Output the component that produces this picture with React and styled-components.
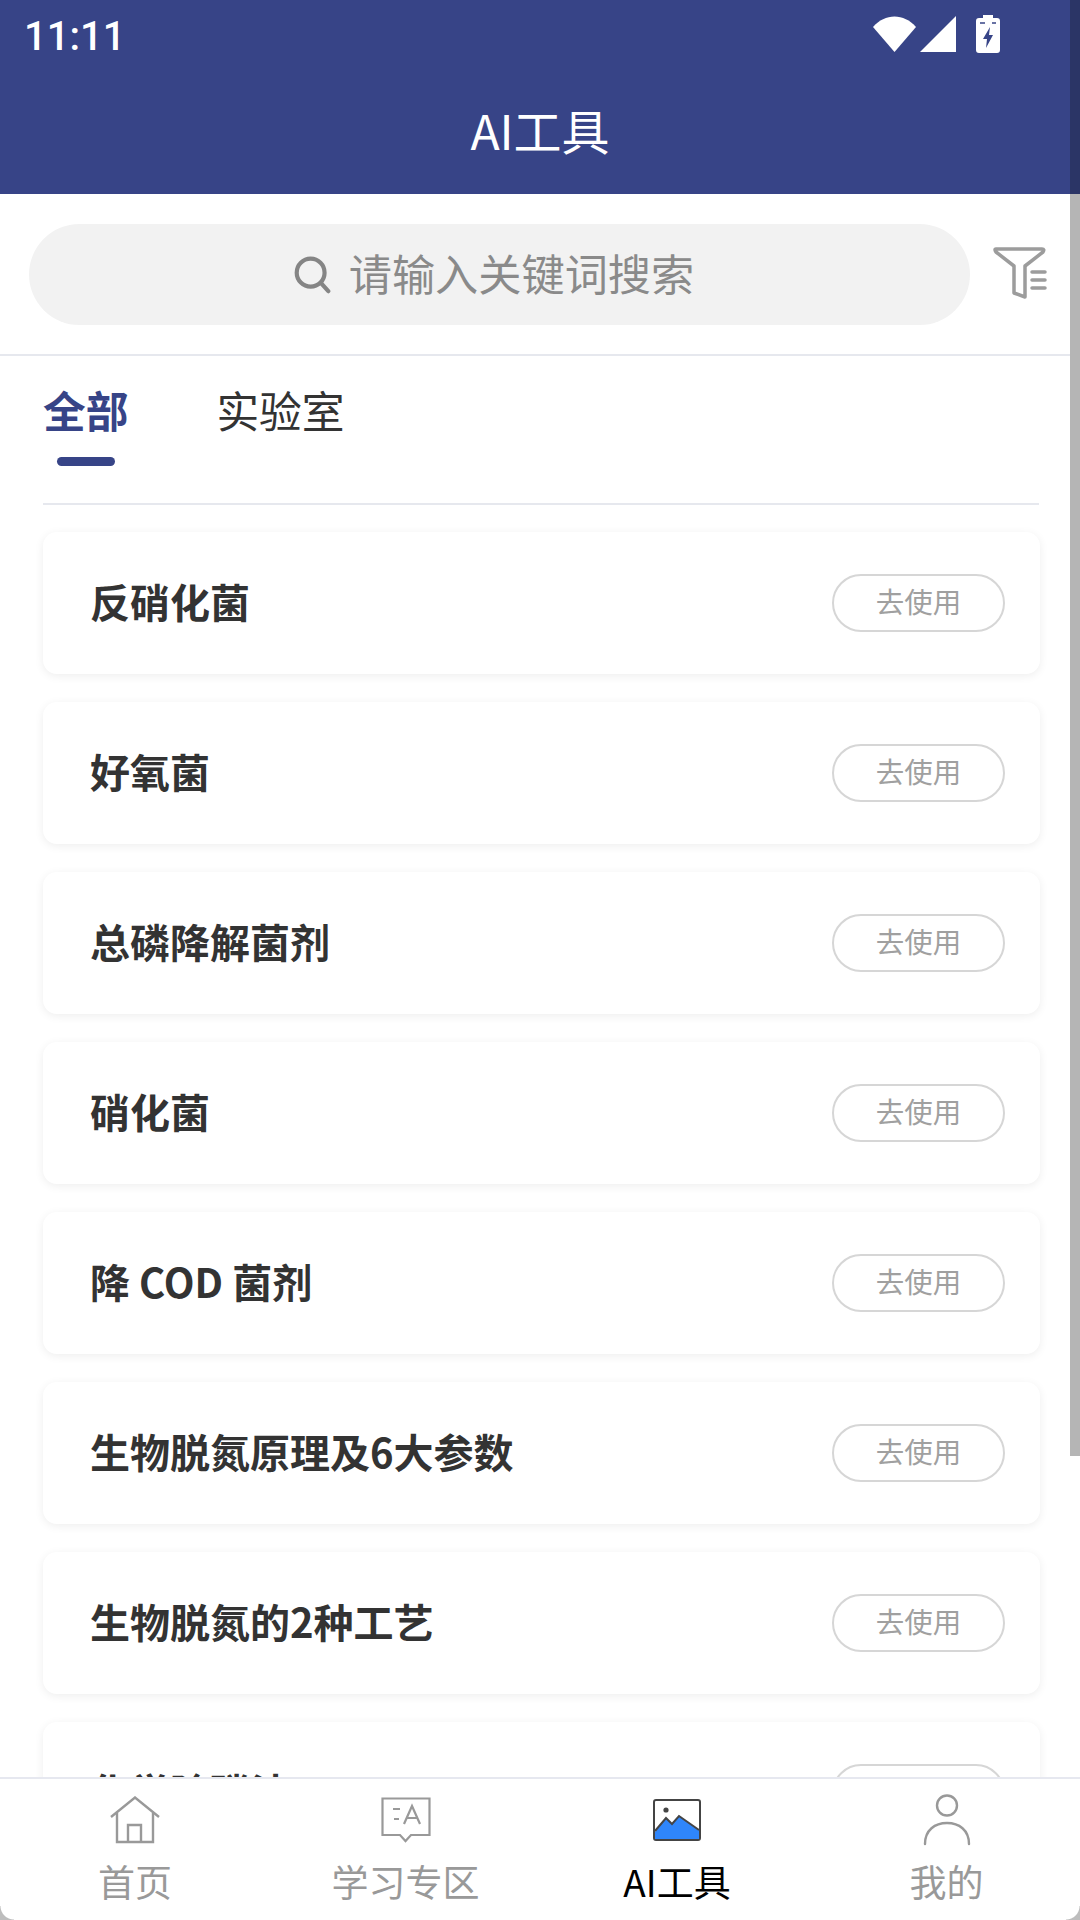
import React from "react";
import styled, { createGlobalStyle } from "styled-components";

const GlobalStyle = createGlobalStyle`
  html, body {
    margin: 0;
    padding: 0;
    background: #fff;
  }
  * {
    box-sizing: border-box;
  }
`;

const FONT = `"Noto Sans CJK SC", "Noto Sans", sans-serif`;
const NAVY = "#374487";

const Screen = styled.div`
  position: relative;
  display: flex;
  flex-direction: column;
  width: 1080px;
  height: 1920px;
  overflow: hidden;
  background: #fff;
  font-family: ${FONT};
`;

// ================ header =================

const Header = styled.header`
  flex-shrink: 0;
  height: 194px;
  background: ${NAVY};
  color: #fff;
`;

const StatusBar = styled.div`
  display: flex;
  justify-content: space-between;
  align-items: center;
  height: 68px;
  padding: 0 80px 0 24px;
`;

const Clock = styled.span`
  margin-top: 4px;
  font-family: Roboto, sans-serif;
  font-size: 40px;
  font-weight: 500;
`;

const StatusIcons = styled.div`
  display: flex;
  align-items: center;
  gap: 4px;
`;

const BatterySlot = styled.span`
  display: flex;
  margin-left: 16px;
`;

const Title = styled.h1`
  margin: 0;
  font-size: 48px;
  font-weight: 400;
  line-height: 122px;
  height: 126px;
  text-align: center;
`;

// ================ search =================

const SearchRow = styled.div`
  flex-shrink: 0;
  display: flex;
  align-items: center;
  height: 162px;
  padding: 0 33px 0 29px;
  border-bottom: 2px solid #e6e8ee;
`;

const SearchBox = styled.div`
  display: flex;
  justify-content: center;
  align-items: center;
  gap: 17px;
  width: 942px;
  height: 101px;
  padding-right: 12px;
  border-radius: 51px;
  background: #f2f2f2;
  color: #8a8a8a;
  font-size: 43.2px;
`;

const SearchLabel = styled.span`
  padding-bottom: 5px;
`;

const FilterBtn = styled.div`
  display: flex;
  margin-left: 23px;
`;

// ================ tabs =================

const TabBar = styled.div`
  flex-shrink: 0;
  display: flex;
  gap: 88px;
  height: 149px;
  margin: 0 41px 0 43px;
  border-bottom: 2px solid #e6e8ee;
`;

const Tab = styled.div`
  position: relative;
  padding-top: 22px;
  font-size: 42.7px;
  line-height: 62px;
  font-weight: ${(p) => (p.$active ? 700 : 400)};
  color: ${(p) => (p.$active ? NAVY : "#333")};

  &::after {
    content: "";
    display: ${(p) => (p.$active ? "block" : "none")};
    width: 58px;
    height: 9px;
    margin: 17px auto 0;
    border-radius: 5px;
    background: ${NAVY};
  }
`;

// ================ list =================

const List = styled.div`
  flex: 1;
  display: flex;
  flex-direction: column;
  gap: 28px;
  min-height: 0;
  overflow: hidden;
  padding: 27px 40px 0 43px;
`;

const Card = styled.div`
  flex-shrink: 0;
  display: flex;
  justify-content: space-between;
  align-items: center;
  height: 142px;
  padding: 0 35px 0 47px;
  border-radius: 14px;
  background: #fff;
  box-shadow: 0 2px 10px rgba(0, 0, 0, 0.07);
`;

const CardName = styled.span`
  padding-bottom: 5px;
  font-size: 40px;
  font-weight: 700;
  color: #333;
`;

const UseBtn = styled.span`
  display: flex;
  justify-content: center;
  align-items: center;
  width: 173px;
  height: 58px;
  padding-bottom: 5px;
  border: 2px solid #d6d6d6;
  border-radius: 29px;
  color: #a0a0a0;
  font-size: 28.5px;
`;

// ================ bottom nav =================

const BottomNav = styled.nav`
  flex-shrink: 0;
  display: grid;
  grid-template-columns: 270px 271px 272px 267px;
  height: 143px;
  border-top: 2px solid #e6e8f0;
  background: #fff;
`;

const NavItem = styled.div`
  display: flex;
  flex-direction: column;
  align-items: center;
  color: ${(p) => (p.$active ? "#000" : "#999")};
  font-size: 37px;
  line-height: 50px;
`;

const NavIcon = styled.div`
  display: flex;
  justify-content: center;
  align-items: center;
  height: 73px;
  margin-bottom: 4px;
  padding-top: 8px;
`;

const ScrollThumb = styled.div`
  position: absolute;
  top: 0;
  right: 0;
  width: 10px;
  height: 1456px;
  background: linear-gradient(#2b3566 0, #2b3566 194px, #b5b5b5 194px);
`;

const Corner = styled.div`
  position: absolute;
  bottom: 0;
  ${(p) => (p.$right ? "right: 0;" : "left: 0;")}
  width: 14px;
  height: 14px;
  background: radial-gradient(
    circle at ${(p) => (p.$right ? "0 0" : "100% 0")},
    transparent 13px,
    #bdbdbd 14px
  );
`;

// ================ icons =================

const WifiIcon = () => (
  <svg width="43" height="36" viewBox="0 0 43 36">
    <path d="M0 11 C12 -3 31 -3 43 11 L21.5 36 Z" fill="#fff" />
  </svg>
);

const SignalIcon = () => (
  <svg width="36" height="36" viewBox="0 0 36 36">
    <path d="M0 36 L36 0 V36 Z" fill="#fff" />
  </svg>
);

const BatteryIcon = () => (
  <svg width="24" height="38" viewBox="0 0 24 38">
    <path
      d="M7 0 H17 V3 H21 Q24 3 24 6 V35 Q24 38 21 38 H3 Q0 38 0 35 V6 Q0 3 3 3 H7 Z"
      fill="#fff"
    />
    <path d="M4 8 H9 M16 8 H20" stroke={NAVY} strokeWidth="1.5" />
    <path d="M14 12 L7 24 H11 L10 33 L17 20 H13 Z" fill={NAVY} />
  </svg>
);

const SearchIcon = () => (
  <svg width="39" height="39" viewBox="0 0 42 42" fill="none" stroke="#858585" strokeWidth="4.5" strokeLinecap="round">
    <circle cx="19" cy="19" r="15" />
    <path d="M30 30 L38 39" />
  </svg>
);

const FilterIcon = () => (
  <svg width="54" height="54" viewBox="0 0 54 54" fill="none" stroke="#9c9c9c" strokeWidth="3.5" strokeLinecap="round" strokeLinejoin="round">
    <path d="M3 2 H49 Q52 2 50 5 L32 19 V50 L21 46 V19 L3 5 Q1 2 3 2 Z" />
    <path d="M39 25 H52 M39 33 H52 M39 41 H52" />
  </svg>
);

const HomeIcon = () => (
  <svg width="50" height="48" viewBox="0 0 50 48" fill="none" stroke="#999" strokeWidth="2.4">
    <path d="M1 21 L25 1.5 L49 21" />
    <path d="M7 17 V46 H43 V17" />
    <path d="M18 46 V29 H31 V46" />
  </svg>
);

const StudyIcon = () => (
  <svg width="50" height="46" viewBox="0 0 50 46" fill="none" stroke="#999" strokeWidth="2.2">
    <path d="M1.5 1.5 H48.5 V38 H30 L24.5 44 L19 38 H1.5 Z" />
    <path d="M12 12 H19 M13 22 H18" />
    <path d="M23 27 L31 9 L39 27 M26 21 H36" />
  </svg>
);

const PictureIcon = () => (
  <svg width="48" height="42" viewBox="0 0 48 42">
    <rect x="1" y="1" width="46" height="40" rx="2" fill="#fff" stroke="#444" strokeWidth="2" />
    <path d="M2 33 L13 19 L19 25 L26 17 L46 31 V40 H2 Z" fill="#2f86fb" stroke="none" />
    <path d="M2 32 L13 19 L19 25 L26 17 L46 31" fill="none" stroke="#444" strokeWidth="2" />
    <circle cx="13" cy="11" r="2.6" fill="#444" />
  </svg>
);

const UserIcon = () => (
  <svg width="48" height="52" viewBox="0 0 48 52" fill="none" stroke="#999" strokeWidth="2.4" strokeLinecap="round">
    <circle cx="24" cy="11.5" r="10" />
    <path d="M2 50 C2 36 12 29 24 29 C36 29 46 36 46 50" />
  </svg>
);

const tools = [
  "反硝化菌",
  "好氧菌",
  "总磷降解菌剂",
  "硝化菌",
  "降 COD 菌剂",
  "生物脱氮原理及6大参数",
  "生物脱氮的2种工艺",
  "化学除磷法",
];

const navItems = [
  { label: "首页", icon: <HomeIcon /> },
  { label: "学习专区", icon: <StudyIcon /> },
  { label: "AI工具", icon: <PictureIcon />, active: true },
  { label: "我的", icon: <UserIcon /> },
];

export default function App() {
  return (
    <>
      <GlobalStyle />
      <Screen>
        <Header>
          <StatusBar>
            <Clock>11:11</Clock>
            <StatusIcons>
              <WifiIcon />
              <SignalIcon />
              <BatterySlot>
                <BatteryIcon />
              </BatterySlot>
            </StatusIcons>
          </StatusBar>
          <Title>AI工具</Title>
        </Header>

        <SearchRow>
          <SearchBox>
            <SearchIcon />
            <SearchLabel>请输入关键词搜索</SearchLabel>
          </SearchBox>
          <FilterBtn>
            <FilterIcon />
          </FilterBtn>
        </SearchRow>

        <TabBar>
          <Tab $active>全部</Tab>
          <Tab>实验室</Tab>
        </TabBar>

        <List>
          {tools.map((name) => (
            <Card key={name}>
              <CardName>{name}</CardName>
              <UseBtn>去使用</UseBtn>
            </Card>
          ))}
        </List>

        <BottomNav>
          {navItems.map((item) => (
            <NavItem key={item.label} $active={item.active}>
              <NavIcon>{item.icon}</NavIcon>
              {item.label}
            </NavItem>
          ))}
        </BottomNav>

        <ScrollThumb />
        <Corner />
        <Corner $right />
      </Screen>
    </>
  );
}
